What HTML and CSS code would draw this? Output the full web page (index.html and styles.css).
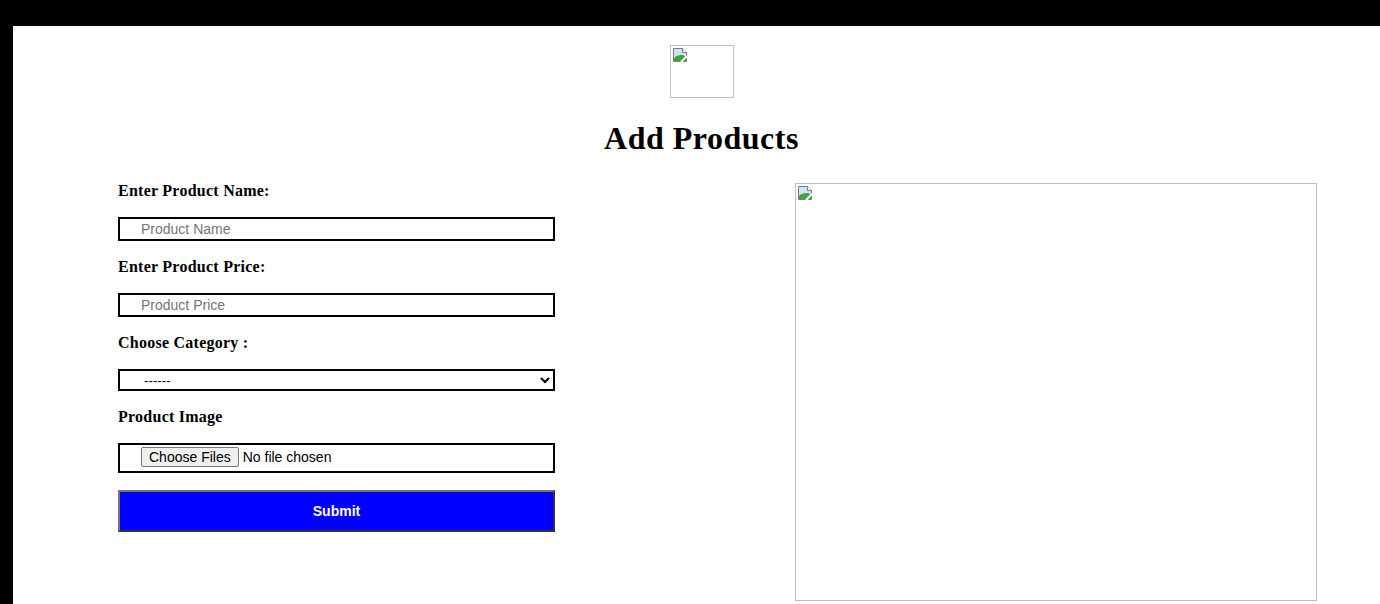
FILE: index.html
```html
<!DOCTYPE html>
<html lang="en">
<head>
    <meta charset="UTF-8">
    <meta name="viewport" content="width=device-width, initial-scale=1.0">
    <title>Add Products</title>
    <link rel="stylesheet" href="styles.css">
</head>
<body>
    <div class="page">
        <div class="header">
            <div class="logo broken">
                <svg class="broken-icon" width="16" height="16" viewBox="0 0 16 16">
                    <path d="M1.5 1.5h9l4 4v9h-13z" fill="#cfe3f8" stroke="#7d7d7d"/>
                    <path d="M10.5 1.5v4h4" fill="#fff" stroke="#7d7d7d"/>
                    <path d="M2 14v-3c3-3 7-3.5 10-2.5l2 1.5v4z" fill="#3fa33a"/>
                    <path d="M9 15l6-6" stroke="#fff" stroke-width="2"/>
                </svg>
            </div>
            <h1>Add Products</h1>
        </div>
        <div class="content">
            <form class="product-form" onsubmit="return false">
                <label for="name">Enter Product Name:</label>
                <input type="text" id="name" class="field" placeholder="Product Name">
                <label for="price">Enter Product Price:</label>
                <input type="text" id="price" class="field" placeholder="Product Price">
                <label for="category">Choose Category :</label>
                <select id="category" class="field select">
                    <option>------</option>
                </select>
                <label for="image">Product Image</label>
                <input type="file" id="image" class="field file" multiple>
                <button type="submit" class="submit">Submit</button>
            </form>
            <div class="preview broken">
                <svg class="broken-icon" width="16" height="16" viewBox="0 0 16 16">
                    <path d="M1.5 1.5h9l4 4v9h-13z" fill="#cfe3f8" stroke="#7d7d7d"/>
                    <path d="M10.5 1.5v4h4" fill="#fff" stroke="#7d7d7d"/>
                    <path d="M2 14v-3c3-3 7-3.5 10-2.5l2 1.5v4z" fill="#3fa33a"/>
                    <path d="M9 15l6-6" stroke="#fff" stroke-width="2"/>
                </svg>
            </div>
        </div>
    </div>
</body>
</html>
```
FILE: styles.css
```css
body {
    margin: 0;
    background: #000;
    padding: 26px 0 0 13px;
    font-family: "Liberation Serif", "Times New Roman", serif;
    overflow: hidden;
}
.page {
    background: #fff;
    min-height: 578px;
    padding-top: 19px;
    box-sizing: border-box;
}
.header {
    display: flex;
    flex-direction: column;
    align-items: center;
    padding-left: 10px;
}
.broken {
    border: 1px solid #c0c0c0;
    box-sizing: border-box;
    padding: 1px;
}
.broken-icon {
    display: block;
}
.logo {
    width: 64px;
    height: 53px;
}
h1 {
    font-size: 32px;
    line-height: 37px;
    letter-spacing: 0.5px;
    margin: 22px 0 25px;
}
.content {
    display: flex;
    padding-left: 105px;
    gap: 240px;
}
.product-form {
    width: 437px;
    display: flex;
    flex-direction: column;
    gap: 17px;
}
label {
    font-weight: bold;
    font-size: 16px;
    line-height: 18px;
    letter-spacing: 0.25px;
}
.field {
    border: 2px solid #000;
    box-sizing: border-box;
    height: 24px;
    padding: 0 0 0 21px;
    font-family: "Liberation Sans", Arial, sans-serif;
    font-size: 14px;
    margin: 0;
    background: #fff;
    color: #000;
    border-radius: 0;
}
.field::placeholder {
    color: #757575;
}
.select {
    height: 22px;
    font-size: 13.33px;
    padding-left: 20px;
}
.file {
    height: 30px;
    padding: 2px 0 0 21px;
}
.file::file-selector-button {
    font-family: "Liberation Sans", Arial, sans-serif;
    font-size: 14px;
    padding: 1px 7px;
    margin-right: 4px;
    border: 1px solid #767676;
    border-radius: 2px;
    background: #efefef;
    color: #000;
}
.submit {
    height: 42px;
    background: #00f;
    color: #fff;
    font-family: "Liberation Sans", Arial, sans-serif;
    font-size: 14px;
    font-weight: bold;
    border: 2px solid;
    border-color: #777 #333 #333 #777;
    cursor: pointer;
}
.preview {
    width: 522px;
    height: 418px;
    margin-top: 1px;
}
```
